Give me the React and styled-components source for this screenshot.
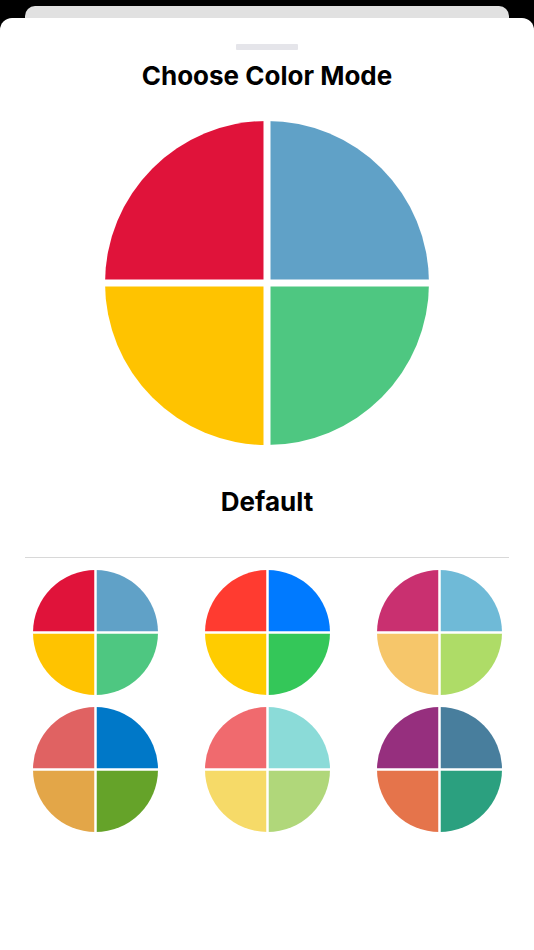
import React from "react";
import styled, { createGlobalStyle } from "styled-components";

const GlobalStyle = createGlobalStyle`
  html, body { margin: 0; padding: 0; background: #000; }
  body { font-family: Inter, "Noto Sans", "Liberation Sans", sans-serif; }
`;

const Screen = styled.div`
  width: 534px;
  height: 950px;
  background: #000;
  display: flex;
  flex-direction: column;
  overflow: hidden;
`;

const BackCard = styled.div`
  margin: 6px 25px 0;
  height: 12px;
  background: #e1e1e1;
  border-radius: 10px 10px 0 0;
  flex: none;
`;

const Sheet = styled.div`
  flex: 1;
  background: #fff;
  border-radius: 12px 12px 0 0;
  display: flex;
  flex-direction: column;
  align-items: center;
  padding-top: 26px;
`;

const Handle = styled.div`
  width: 62px;
  height: 6px;
  border-radius: 1px;
  background: #e5e5ea;
`;

const Title = styled.h1`
  margin: 11px 0 0;
  font-size: 26px;
  line-height: 30px;
  font-weight: 700;
  color: #000;
`;

const BigPieWrap = styled.div`
  margin-top: 30px;
  width: 324px;
  height: 324px;
`;

const ModeName = styled.h2`
  margin: 42px 0 0;
  font-size: 26px;
  line-height: 30px;
  font-weight: 700;
  color: #000;
`;

const Divider = styled.div`
  margin-top: 40px;
  width: 484px;
  height: 1px;
  background: #d8d8d8;
`;

const Grid = styled.div`
  margin-top: 12px;
  width: 469px;
  display: grid;
  grid-template-columns: repeat(3, 125px);
  justify-content: space-between;
  row-gap: 12px;
`;

const PieButton = styled.button`
  width: 125px;
  height: 125px;
  padding: 0;
  border: none;
  background: none;
  cursor: pointer;
  display: block;
`;

function Pie({ size, gap, colors }) {
  const r = size / 2;
  const c = r;
  const [tl, tr, bl, br] = colors;
  return (
    <svg width={size} height={size} viewBox={`0 0 ${size} ${size}`} style={{ display: "block" }}>
      <path d={`M${c} ${c} L${c - r} ${c} A${r} ${r} 0 0 1 ${c} ${c - r} Z`} fill={tl} />
      <path d={`M${c} ${c} L${c} ${c - r} A${r} ${r} 0 0 1 ${c + r} ${c} Z`} fill={tr} />
      <path d={`M${c} ${c} L${c + r} ${c} A${r} ${r} 0 0 1 ${c} ${c + r} Z`} fill={br} />
      <path d={`M${c} ${c} L${c} ${c + r} A${r} ${r} 0 0 1 ${c - r} ${c} Z`} fill={bl} />
      <line x1={c} y1={0} x2={c} y2={size} stroke="#fff" strokeWidth={gap} />
      <line x1={0} y1={c} x2={size} y2={c} stroke="#fff" strokeWidth={gap} />
    </svg>
  );
}

const palettes = [
  ["#E0133A", "#60A1C7", "#FFC300", "#4EC781"],
  ["#FF3B30", "#007AFF", "#FFCC00", "#34C759"],
  ["#C93070", "#6FBAD7", "#F6C66A", "#AEDC67"],
  ["#E06262", "#0078C8", "#E3A648", "#65A329"],
  ["#F06A6E", "#8BDBD8", "#F6DA68", "#B0D77A"],
  ["#962F7E", "#487E9D", "#E5744B", "#2BA07F"],
];

export default function App() {
  return (
    <>
      <GlobalStyle />
      <Screen>
        <BackCard />
        <Sheet>
          <Handle />
          <Title>Choose Color Mode</Title>
          <BigPieWrap>
            <Pie size={324} gap={7} colors={palettes[0]} />
          </BigPieWrap>
          <ModeName>Default</ModeName>
          <Divider />
          <Grid>
            {palettes.map((p, i) => (
              <PieButton key={i} aria-label={`Palette ${i + 1}`}>
                <Pie size={125} gap={2.5} colors={p} />
              </PieButton>
            ))}
          </Grid>
        </Sheet>
      </Screen>
    </>
  );
}
